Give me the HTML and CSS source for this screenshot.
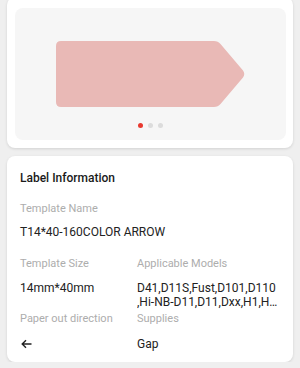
FILE: index.html
```html
<!DOCTYPE html>
<html>
<head>
<meta charset="utf-8">
<link rel="stylesheet" href="styles.css">
</head>
<body>
<div class="page">
  <div class="card preview-card">
    <div class="preview">
      <svg class="label-shape" width="189" height="66" viewBox="0 0 189 66">
        <path d="M5,0 H158 Q162,0 164.5,3 L187,29.5 Q189.5,33 187,36.5 L164.5,63 Q162,66 158,66 H5 Q0,66 0,61 V5 Q0,0 5,0 Z" fill="#e9b9b6"/>
      </svg>
      <div class="dots">
        <span class="dot active"></span>
        <span class="dot"></span>
        <span class="dot"></span>
      </div>
    </div>
  </div>
  <div class="card info-card">
    <div class="title">Label Information</div>
    <div class="field name-field">
      <div class="label">Template Name</div>
      <div class="value">T14*40-160COLOR ARROW</div>
    </div>
    <div class="grid">
      <div class="field">
        <div class="label">Template Size</div>
        <div class="value">14mm*40mm</div>
      </div>
      <div class="field">
        <div class="label">Applicable Models</div>
        <div class="value models">
          <span class="line">D41,D11S,Fust,D101,D110</span>
          <span class="line ellipsis">,Hi-NB-D11,D11,Dxx,H1,H1S,D110M,D101H</span>
        </div>
      </div>
      <div class="field">
        <div class="label">Paper out direction</div>
        <div class="value">
          <svg class="dir-icon" width="11" height="10" viewBox="0 0 11 10">
            <path d="M10.5,5 H1.5 M5,1.2 L1.2,5 L5,8.8" fill="none" stroke="#222" stroke-width="1.4"/>
          </svg>
        </div>
      </div>
      <div class="field">
        <div class="label">Supplies</div>
        <div class="value">Gap</div>
      </div>
    </div>
  </div>
</div>
</body>
</html>
```

FILE: styles.css
```css
* { box-sizing: border-box; }
html, body {
  margin: 0;
  padding: 0;
  background: #efefef;
  font-family: Roboto, "Noto Sans", sans-serif;
}
.page {
  padding: 0 7px;
  display: flex;
  flex-direction: column;
  gap: 8px;
}
.card {
  background: #fff;
  border-radius: 8px;
  box-shadow: 0 1px 3px rgba(0,0,0,0.12);
}
.preview-card {
  margin-top: -3px;
  padding: 11px 7px 8px 8px;
}
.preview {
  background: #f6f6f6;
  border-radius: 8px;
  height: 132px;
  padding-top: 33px;
  display: flex;
  flex-direction: column;
  align-items: center;
}
.label-shape { display: block; }
.dots {
  margin-top: 16px;
  display: flex;
  gap: 5px;
}
.dot {
  width: 5px;
  height: 5px;
  border-radius: 50%;
  background: #dcdcdc;
}
.dot.active { background: #e8392f; }
.info-card {
  padding: 14px 13px 12px 13px;
  height: 206px;
}
.title {
  font-size: 12px;
  font-weight: 500;
  line-height: 16px;
  color: #1a1a1a;
}
.field { display: flex; flex-direction: column; }
.label {
  font-size: 11px;
  line-height: 14px;
  color: #adadad;
}
.value {
  font-size: 12px;
  line-height: 14px;
  color: #222;
  margin-top: 9px;
}
.name-field { margin-top: 16px; }
.grid {
  margin-top: 18px;
  display: grid;
  grid-template-columns: 117px 143px;
  row-gap: 3px;
}
.grid .value { margin-top: 10px; }
.grid .field:nth-child(n+3) .value { margin-top: 11px; }
.models .line { display: block; white-space: nowrap; }
.models .ellipsis {
  overflow: hidden;
  text-overflow: ellipsis;
}
.dir-icon { display: block; margin-top: 2px; margin-left: 1px; }
```
